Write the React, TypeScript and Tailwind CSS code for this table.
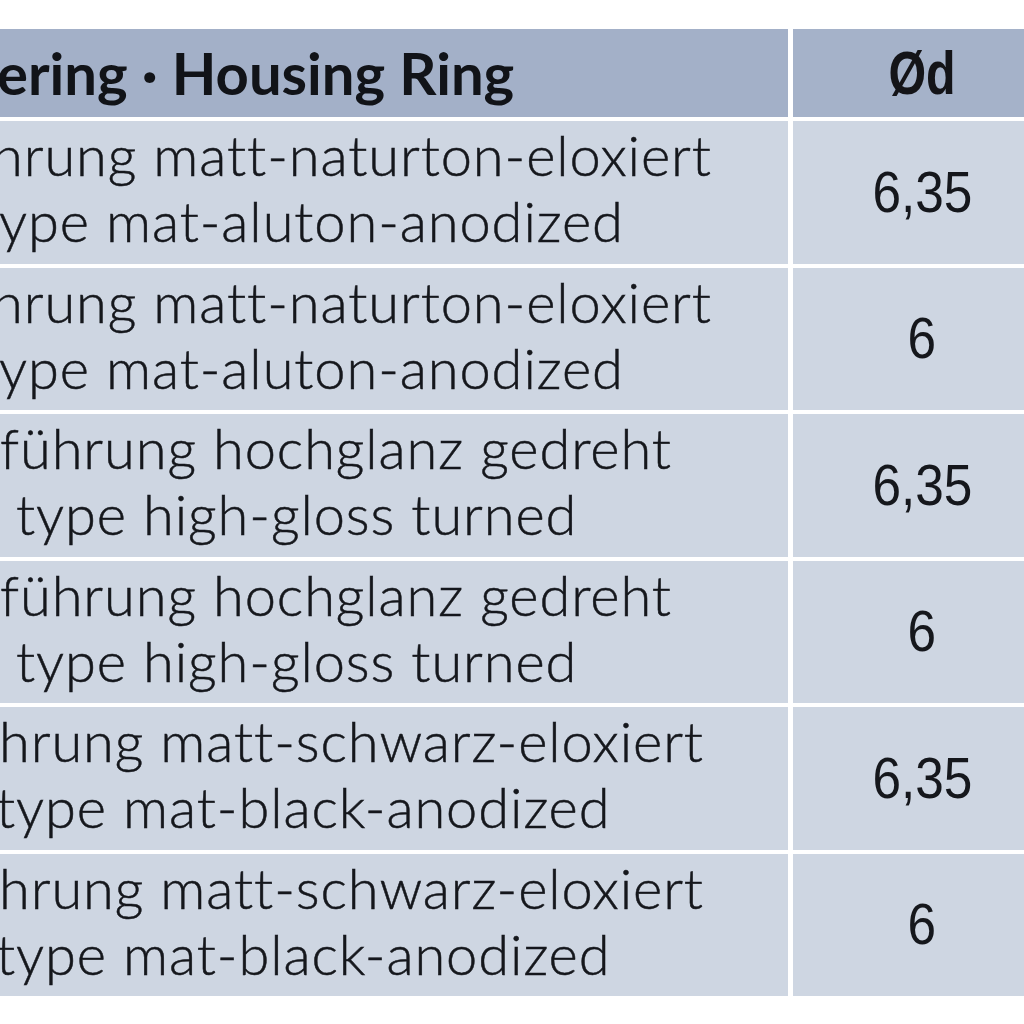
import React from "react";

const rows = [
  { l1: "hrung matt-naturton-eloxiert", o1: "-ml-[8px]", l2: "ype mat-aluton-anodized", o2: "-ml-[1px]", d: "6,35" },
  { l1: "hrung matt-naturton-eloxiert", o1: "-ml-[8px]", l2: "ype mat-aluton-anodized", o2: "-ml-[1px]", d: "6" },
  { l1: "führung hochglanz gedreht", o1: "ml-[0px]", l2: "type high-gloss turned", o2: "ml-[16px]", d: "6,35" },
  { l1: "führung hochglanz gedreht", o1: "ml-[0px]", l2: "type high-gloss turned", o2: "ml-[16px]", d: "6" },
  { l1: "hrung matt-schwarz-eloxiert", o1: "-ml-[1px]", l2: "type mat-black-anodized", o2: "-ml-[4px]", d: "6,35" },
  { l1: "hrung matt-schwarz-eloxiert", o1: "-ml-[1px]", l2: "type mat-black-anodized", o2: "-ml-[4px]", d: "6" },
];

export default function App() {
  return (
    <div className="w-[1024px] h-[1024px] bg-white overflow-hidden">
      <div className="flex flex-col gap-[4px] pt-[29px] w-[1060px]">
        <div className="flex gap-[5px] h-[88px]">
          <div className="w-[788px] bg-[#a3b0c8] flex items-center overflow-hidden">
            <span
              className="whitespace-nowrap text-[58px] font-bold text-[#111318] -ml-[3px] leading-none [font-variant-ligatures:none]"
              style={{ fontFamily: "Lato, 'Noto Sans', sans-serif" }}
            >
              ering · Housing Ring
            </span>
          </div>
          <div className="w-[258px] bg-[#a5b2c9] flex items-center justify-center">
            <span
              className="inline-block text-[62px] font-bold text-[#141418] leading-none scale-x-[0.78]"
              style={{ fontFamily: "'Liberation Sans', Arial, sans-serif" }}
            >
              Ød
            </span>
          </div>
        </div>
        {rows.map((r, i) => (
          <div key={i} className="flex gap-[5px] h-[142.5px]">
            <div
              className="w-[788px] bg-[#ced6e2] flex flex-col justify-center overflow-hidden pb-[8px] text-[#15171c] text-[56px] font-light tracking-[0.9px] leading-[66px] whitespace-nowrap [font-variant-ligatures:none] [-webkit-text-stroke:0.5px_#15171c]"
              style={{ fontFamily: "Lato, 'Noto Sans', sans-serif" }}
            >
              <div className={r.o1}>{r.l1}</div>
              <div className={r.o2}>{r.l2}</div>
            </div>
            <div className="w-[258px] bg-[#ced6e2] flex items-center justify-center">
              <span
                className="inline-block text-[57px] scale-x-[0.9] text-[#15171c] leading-none"
                style={{ fontFamily: "'Liberation Sans', Arial, sans-serif" }}
              >
                {r.d}
              </span>
            </div>
          </div>
        ))}
      </div>
    </div>
  );
}
